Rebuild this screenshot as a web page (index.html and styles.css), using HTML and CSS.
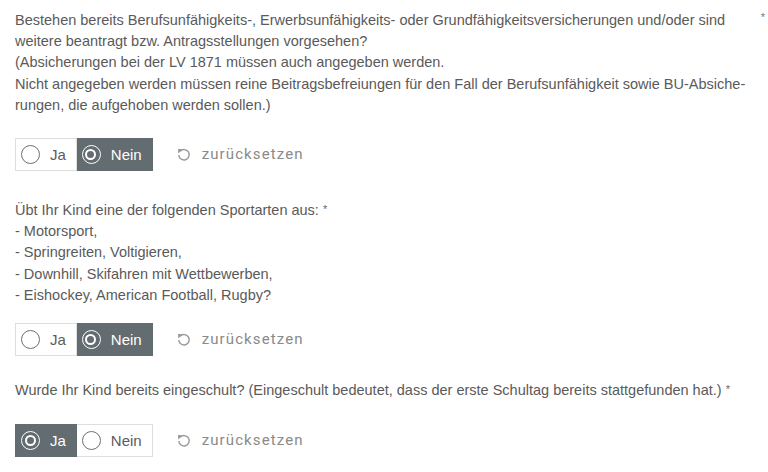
FILE: index.html
```html
<!DOCTYPE html>
<html lang="de">
<head>
<meta charset="utf-8">
<link rel="stylesheet" href="styles.css">
</head>
<body>
<form class="form">
  <div class="question q1">
    <div class="label label-split">
      <p class="label-text">Bestehen bereits Berufsunfähigkeits-, Erwerbsunfähigkeits- oder Grundfähigkeitsversicherungen und/oder sind<br>weitere beantragt bzw. Antragsstellungen vorgesehen?<br>(Absicherungen bei der LV 1871 müssen auch angegeben werden.<br>Nicht angegeben werden müssen reine Beitragsbefreiungen für den Fall der Berufsunfähigkeit sowie BU-Absiche-<br>rungen, die aufgehoben werden sollen.)</p>
      <span class="req">*</span>
    </div>
    <div class="controls">
      <div class="toggle">
        <span class="seg"><span class="radio"></span>Ja</span>
        <span class="seg seg-on"><span class="radio radio-on"></span>Nein</span>
      </div>
      <span class="reset"><svg class="reset-icon" viewBox="0 0 14 14" width="14" height="14"><path d="M3.2 3.2 A5.2 5.2 0 1 1 1.8 7" fill="none" stroke="currentColor" stroke-width="1.4"/><path d="M1 1 L5.6 1.3 L1.3 5.6 Z" fill="currentColor"/></svg>zurücksetzen</span>
    </div>
  </div>

  <div class="question q2">
    <p class="label">Übt Ihr Kind eine der folgenden Sportarten aus: <span class="req-inline">*</span><br>- Motorsport,<br>- Springreiten, Voltigieren,<br>- Downhill, Skifahren mit Wettbewerben,<br>- Eishockey, American Football, Rugby?</p>
    <div class="controls">
      <div class="toggle">
        <span class="seg"><span class="radio"></span>Ja</span>
        <span class="seg seg-on"><span class="radio radio-on"></span>Nein</span>
      </div>
      <span class="reset"><svg class="reset-icon" viewBox="0 0 14 14" width="14" height="14"><path d="M3.2 3.2 A5.2 5.2 0 1 1 1.8 7" fill="none" stroke="currentColor" stroke-width="1.4"/><path d="M1 1 L5.6 1.3 L1.3 5.6 Z" fill="currentColor"/></svg>zurücksetzen</span>
    </div>
  </div>

  <div class="question q3">
    <p class="label">Wurde Ihr Kind bereits eingeschult? (Eingeschult bedeutet, dass der erste Schultag bereits stattgefunden hat.) <span class="req-inline">*</span></p>
    <div class="controls">
      <div class="toggle">
        <span class="seg seg-on"><span class="radio radio-on"></span>Ja</span>
        <span class="seg"><span class="radio"></span>Nein</span>
      </div>
      <span class="reset"><svg class="reset-icon" viewBox="0 0 14 14" width="14" height="14"><path d="M3.2 3.2 A5.2 5.2 0 1 1 1.8 7" fill="none" stroke="currentColor" stroke-width="1.4"/><path d="M1 1 L5.6 1.3 L1.3 5.6 Z" fill="currentColor"/></svg>zurücksetzen</span>
    </div>
  </div>
</form>
</body>
</html>
```

FILE: styles.css
```css
* { box-sizing: border-box; }

html, body {
  margin: 0;
  background: #ffffff;
}

body {
  font-family: "Liberation Sans", Arial, sans-serif;
  font-size: 14.5px;
  line-height: 21.2px;
  color: #5a5a5a;
}

.form {
  padding: 10px 2px 0 15px;
  display: flex;
  flex-direction: column;
}

.label {
  margin: 0;
}

.label-split {
  display: flex;
  justify-content: space-between;
  align-items: flex-start;
}

.label-text {
  margin: 0;
  white-space: nowrap;
}

.req {
  font-size: 11px;
  line-height: 15px;
  color: #777;
  padding-right: 1px;
}

.req-inline {
  font-size: 11px;
  color: #666;
  vertical-align: 2px;
}

.q1 .controls { margin-top: 22px; }
.q2 { margin-top: 28px; }
.q2 .controls { margin-top: 17px; }
.q3 { margin-top: 23px; }
.q3 .controls { margin-top: 23px; }

.controls {
  display: flex;
  align-items: center;
  gap: 24px;
}

.toggle {
  display: flex;
  height: 33px;
}

.seg {
  display: flex;
  align-items: center;
  gap: 10px;
  padding: 0 10px 0 5px;
  border: 1px solid #dedede;
  font-size: 15px;
  color: #5c5c5c;
  background: #fff;
}

.seg + .seg { border-left: none; }

.seg-on {
  background: #636c71;
  border-color: #636c71;
  color: #ffffff;
}

.radio {
  width: 19px;
  height: 19px;
  border-radius: 50%;
  border: 1.5px solid #6e6e6e;
  flex: none;
  position: relative;
}

.radio-on {
  border: 1.5px solid #ffffff;
}

.radio-on::after {
  content: "";
  position: absolute;
  left: 2.5px;
  top: 2.5px;
  width: 11px;
  height: 11px;
  border-radius: 50%;
  border: 2.5px solid #ffffff;
  box-sizing: border-box;
}

.reset {
  display: flex;
  align-items: center;
  gap: 11px;
  font-family: Roboto, "Liberation Sans", sans-serif;
  font-size: 15px;
  letter-spacing: 1.1px;
  color: #8a8a8a;
}

.reset-icon {
  color: #999999;
  flex: none;
}
```
